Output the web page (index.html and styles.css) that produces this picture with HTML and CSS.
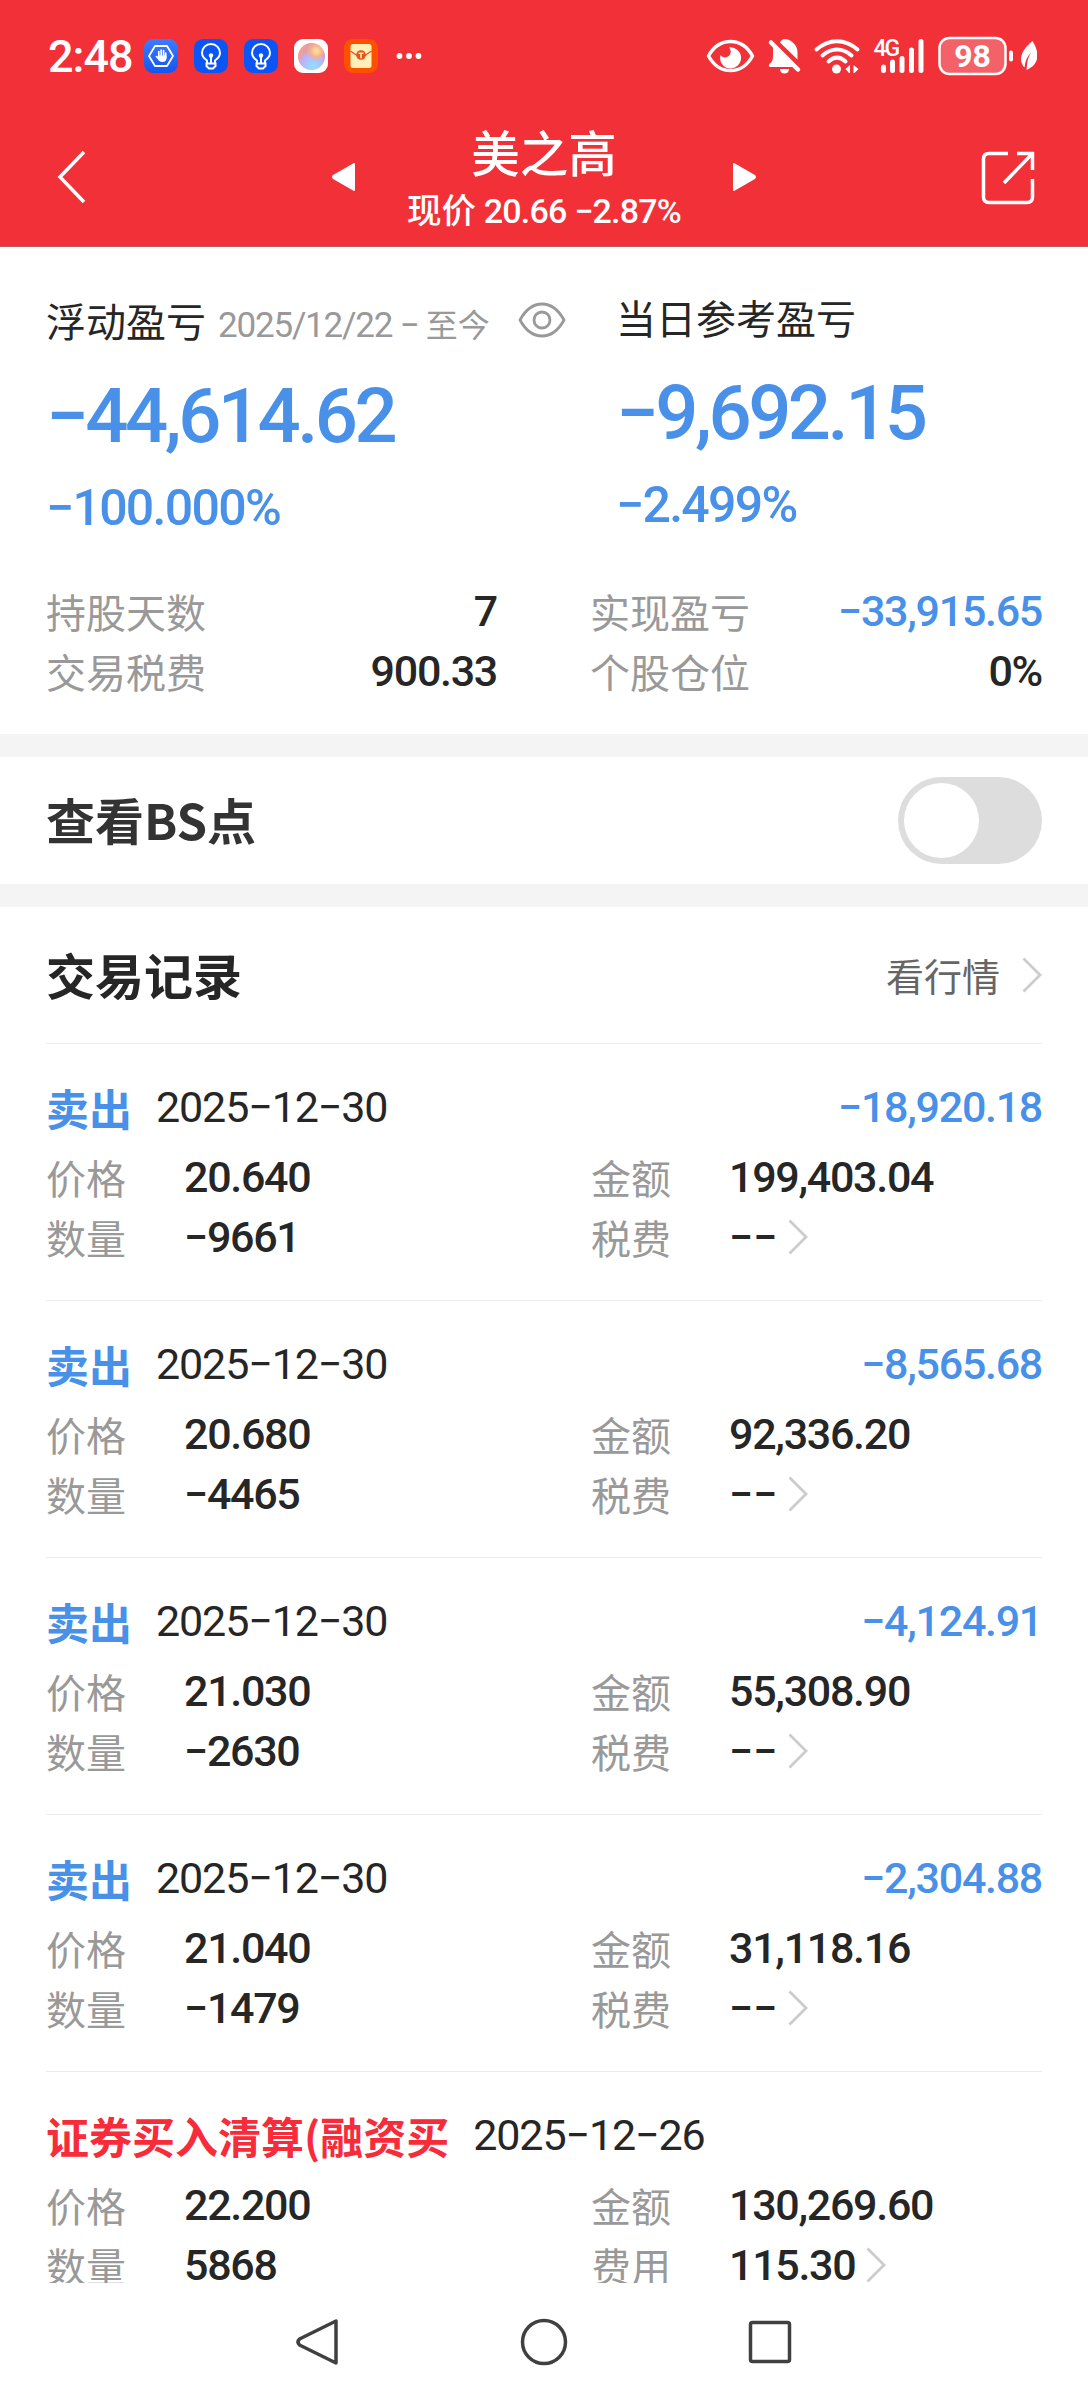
FILE: index.html
```html
<!DOCTYPE html>
<html lang="zh-CN">
<head>
    <meta charset="UTF-8">
    <title>美之高</title>
    <link rel="stylesheet" href="styles.css">
</head>
<body>
<svg class="symbols">
    <symbol id="chevron" viewBox="0 0 20 36">
        <path d="M1.5 1.5L18 18L1.5 34.5" fill="none" stroke="currentColor" stroke-width="2.8"/>
    </symbol>
    <symbol id="bulb" viewBox="0 0 34 34">
        <path d="M13 24v-2.5c-3-2-5-4-5-7.500a9 9 0 0 1 18 0c0 3.500-2 5.500-5 7.500V24M12.500 24.500h9v2.500l-2.500 2.500h-4L12.500 27z" fill="none" stroke="#fff" stroke-width="2"/>
        <circle cx="17" cy="16.500" r="2.200" fill="#fff"/>
        <path d="M17 16.500V24" stroke="#fff" stroke-width="2"/>
    </symbol>
</svg>

<div class="header">
    <div class="status-bar">
        <div class="status-left">
            <span class="time num">2:48</span>
            <div class="app-icon app-hand">
                <svg viewBox="0 0 34 34">
                    <path d="M11 7h12l6 10-6 10H11L5 17z" fill="none" stroke="#fff" stroke-width="1.800" stroke-linejoin="round"/>
                    <path d="M14.800 18v-5.500M17.200 17v-6M19.600 17v-5.500M21.700 18v-4" stroke="#fff" stroke-width="1.700" stroke-linecap="round"/>
                    <path d="M14 16.500h8.600V19c0 2.500-1.600 4-4 4-2.600 0-3.600-1-4.800-2.700l-2.500-3c.8-1.200 1.900-.6 2.700.4z" fill="#fff"/>
                </svg>
            </div>
            <div class="app-icon app-bulb"><svg><use href="#bulb"/></svg></div>
            <div class="app-icon app-bulb"><svg><use href="#bulb"/></svg></div>
            <div class="app-icon app-ball"><div class="ball"></div></div>
            <div class="app-icon app-mail">
                <svg viewBox="0 0 34 34">
                    <rect x="6.500" y="5" width="21" height="24" rx="2.500" fill="#fff0b8"/>
                    <path d="M6.500 12l6.500 4.500M27.500 12L21 16.500" stroke="#e8531b" stroke-width="1.300"/>
                    <circle cx="17" cy="16" r="4.800" fill="#e8531b"/>
                    <path d="M14.500 14.200h5M17 14.200v5" stroke="#fff0b8" stroke-width="1.600"/>
                </svg>
            </div>
            <svg class="dots" viewBox="0 0 26 8" fill="#fff">
                <circle cx="3.500" cy="4" r="2.900"/><circle cx="13" cy="4" r="2.900"/><circle cx="22.500" cy="4" r="2.900"/>
            </svg>
        </div>
        <svg class="status-right" viewBox="0 0 332 40" fill="none">
            <!-- eye comfort -->
            <path d="M3.500 20C9 10 16 5.500 25.500 5.500S42 10 47.500 20C42 30 35 34.500 25.500 34.500S9 30 3.500 20z" stroke="#fff" stroke-width="3.500" stroke-linejoin="round"/>
            <path d="M24 11.500a10.500 10.500 0 1 1-8.500 7.500c1.500 2 4 3 6.500 2 4-1.500 5-6 2-9.500z" fill="#fff"/>
            <!-- muted bell -->
            <path d="M75 6.500c1-3 4.500-4.500 8-3 6 2.500 9.500 7 9.500 13v7z" fill="#fff"/>
            <path d="M68 9l22 22H65.500c-2 0-2-2.500-.5-3.500 2.500-2 3-4 3-8z" fill="#fff"/>
            <path d="M66 6.500l27 27" stroke="#fff" stroke-width="4.500" stroke-linecap="round"/>
            <path d="M75 33h9c0 3-2 4.500-4.500 4.500S75 36 75 33z" fill="#fff"/>
            <!-- wifi -->
            <g stroke="#fff" stroke-width="4" stroke-linecap="round">
                <path d="M111.500 13.500c12.500-11 28.500-11 41 0"/>
                <path d="M117.500 19.500c9-8 20-8 29 0"/>
                <path d="M123.500 25.500c5.500-5 11.500-5 17 0"/>
            </g>
            <circle cx="131.500" cy="33" r="4.500" fill="#fff"/>
            <path d="M145 29v8h-1l-3.500-4zM148.500 29v8h1l4-4z" fill="#fff"/>
            <!-- signal -->
            <text x="168.500" y="20" class="net-label">4G</text>
            <path d="M178.500 31v3.500M187.500 26v8.500M197 22.500v12M206.500 14v20.500M216 5.500v29" stroke="#fff" stroke-width="5" stroke-linecap="round"/>
            <!-- battery -->
            <rect x="234.500" y="2" width="66" height="36" rx="10" fill="#f46269" stroke="#fff" stroke-width="2.500"/>
            <text x="267.500" y="31" class="battery-level">98</text>
            <rect x="304" y="14.500" width="4" height="11" rx="2" fill="#fff"/>
            <path d="M327.500 5c7 11 7.500 23-5 28.500l-1 .5.500-5c.3-4 1.500-9 4.500-13-4 4-6.500 9-7 15.500-7-7-3-18 8-26.500z" fill="#fff"/>
        </svg>
    </div>
    <div class="title-bar">
        <svg class="back" viewBox="0 0 30 54"><path d="M27 2L3 27l24 25" fill="none" stroke="#fff" stroke-width="3.500"/></svg>
        <div class="stock">
            <svg class="arrow" viewBox="0 0 24 30"><path d="M22 2v26L2 16.500q-2-1.500 0-3z" fill="#fff" stroke="#fff" stroke-width="2" stroke-linejoin="round"/></svg>
            <div class="stock-info">
                <div class="stock-name">美之高</div>
                <div class="stock-price"><span class="price-label">现价</span> <span class="num">20.66 −2.87%</span></div>
            </div>
            <svg class="arrow" viewBox="0 0 24 30"><path d="M2 2v26l20-11.500q2-1.500 0-3z" fill="#fff" stroke="#fff" stroke-width="2" stroke-linejoin="round"/></svg>
        </div>
        <svg class="share" viewBox="0 0 54 54" fill="none" stroke="#fff" stroke-width="3.500">
            <path d="M27 2.500H8Q2.500 2.500 2.500 8v38q0 5.500 5.500 5.500h38q5.500 0 5.500-5.500V28M36 2.500h15.500V19M51 3L23 32"/>
        </svg>
    </div>
</div>

<div class="content">
    <div class="summary">
        <div class="profit-row">
            <div class="profit">
                <div class="profit-title">浮动盈亏
                    <span class="date-range"><span class="num">2025/12/22 −</span> 至今</span>
                    <svg class="eye" viewBox="0 0 48 36" fill="none" stroke="#999" stroke-width="2.800">
                        <path d="M2 18C8 7 15 2 24 2s16 5 22 16c-6 11-13 16-22 16S8 29 2 18z" stroke-linejoin="round"/>
                        <circle cx="24" cy="18" r="8"/>
                    </svg>
                </div>
                <div class="profit-value num">−44,614.62</div>
                <div class="profit-rate num">−100.000%</div>
            </div>
            <div class="profit today">
                <div class="profit-title">当日参考盈亏</div>
                <div class="profit-value num">−9,692.15</div>
                <div class="profit-rate num">−2.499%</div>
            </div>
        </div>
        <div class="details">
            <div class="detail"><span class="label">持股天数</span><span class="num">7</span></div>
            <div class="detail"><span class="label">实现盈亏</span><span class="num blue">−33,915.65</span></div>
            <div class="detail"><span class="label">交易税费</span><span class="num">900.33</span></div>
            <div class="detail"><span class="label">个股仓位</span><span class="num">0%</span></div>
        </div>
    </div>

    <div class="bs-row">
        <span class="section-title bs-title">查看BS点</span>
        <div class="toggle"></div>
    </div>

    <div class="trades">
        <div class="trades-header">
            <span class="section-title">交易记录</span>
            <span class="quote-link">看行情 <svg class="chevron"><use href="#chevron"/></svg></span>
        </div>

        <div class="record">
            <div class="record-head">
                <span class="type blue">卖出</span>
                <span class="date num">2025−12−30</span>
                <span class="amount num blue">−18,920.18</span>
            </div>
            <div class="record-grid">
                <span class="label">价格</span><span class="num">20.640</span>
                <span class="label">金额</span><span class="num">199,403.04</span>
                <span class="label">数量</span><span class="num">−9661</span>
                <span class="label">税费</span><span class="num fee"><span class="dashes">−−</span><svg class="chevron"><use href="#chevron"/></svg></span>
            </div>
        </div>

        <div class="record">
            <div class="record-head">
                <span class="type blue">卖出</span>
                <span class="date num">2025−12−30</span>
                <span class="amount num blue">−8,565.68</span>
            </div>
            <div class="record-grid">
                <span class="label">价格</span><span class="num">20.680</span>
                <span class="label">金额</span><span class="num">92,336.20</span>
                <span class="label">数量</span><span class="num">−4465</span>
                <span class="label">税费</span><span class="num fee"><span class="dashes">−−</span><svg class="chevron"><use href="#chevron"/></svg></span>
            </div>
        </div>

        <div class="record">
            <div class="record-head">
                <span class="type blue">卖出</span>
                <span class="date num">2025−12−30</span>
                <span class="amount num blue">−4,124.91</span>
            </div>
            <div class="record-grid">
                <span class="label">价格</span><span class="num">21.030</span>
                <span class="label">金额</span><span class="num">55,308.90</span>
                <span class="label">数量</span><span class="num">−2630</span>
                <span class="label">税费</span><span class="num fee"><span class="dashes">−−</span><svg class="chevron"><use href="#chevron"/></svg></span>
            </div>
        </div>

        <div class="record">
            <div class="record-head">
                <span class="type blue">卖出</span>
                <span class="date num">2025−12−30</span>
                <span class="amount num blue">−2,304.88</span>
            </div>
            <div class="record-grid">
                <span class="label">价格</span><span class="num">21.040</span>
                <span class="label">金额</span><span class="num">31,118.16</span>
                <span class="label">数量</span><span class="num">−1479</span>
                <span class="label">税费</span><span class="num fee"><span class="dashes">−−</span><svg class="chevron"><use href="#chevron"/></svg></span>
            </div>
        </div>

        <div class="record">
            <div class="record-head">
                <span class="type red">证券买入清算(融资买</span>
                <span class="date num">2025−12−26</span>
            </div>
            <div class="record-grid">
                <span class="label">价格</span><span class="num">22.200</span>
                <span class="label">金额</span><span class="num">130,269.60</span>
                <span class="label">数量</span><span class="num">5868</span>
                <span class="label">费用</span><span class="num fee">115.30<svg class="chevron"><use href="#chevron"/></svg></span>
            </div>
        </div>
    </div>
</div>

<div class="nav-bar">
    <svg viewBox="0 0 48 48"><path d="M42 3v42L5.500 27q-3-3 0-6z" stroke-linejoin="round"/></svg>
    <svg viewBox="0 0 48 48"><circle cx="24" cy="24" r="21.500"/></svg>
    <svg viewBox="0 0 48 48"><rect x="4.500" y="4.500" width="39" height="39" rx="2"/></svg>
</div>
</body>
</html>
```

FILE: styles.css
```css
* {
    margin: 0;
    padding: 0;
    box-sizing: border-box;
}

body {
    display: flex;
    flex-direction: column;
    width: 1088px;
    height: 2400px;
    overflow: hidden;
    background: #fff;
    color: #262626;
    font-family: "Noto Sans CJK SC", sans-serif;
    font-size: 40px;
}

svg {
    display: block;
    flex-shrink: 0;
}

.symbols {
    position: absolute;
    width: 0;
    height: 0;
}

.num {
    font-family: Roboto, "Noto Sans CJK SC", sans-serif;
    font-size: 43px;
    font-weight: 500;
    letter-spacing: -0.03em;
}

.blue {
    color: #4890e8;
}

.red {
    color: #f72b3a;
}

.label {
    color: #999;
}

/* Header */
.header {
    height: 247px;
    background: #f23038;
    border-bottom: 1px solid #c05a5e;
    color: #fff;
}

.status-bar {
    display: flex;
    justify-content: space-between;
    align-items: center;
    height: 112px;
    padding: 0 51px 0 48px;
}

.status-left {
    display: flex;
    align-items: center;
    gap: 16px;
}

.time {
    width: 80px;
    font-size: 45px;
    letter-spacing: -1px;
    white-space: nowrap;
}

.app-icon {
    display: flex;
    align-items: center;
    justify-content: center;
    width: 34px;
    height: 34px;
    border-radius: 9px;
}

.app-icon svg {
    width: 34px;
    height: 34px;
}

.app-hand {
    background: linear-gradient(#3d7cff, #1456f0);
}

.app-bulb {
    background: #0b55f5;
}

.app-ball {
    background: #fff;
}

.ball {
    width: 27px;
    height: 27px;
    border-radius: 50%;
    background:
        radial-gradient(circle at 68% 30%, #ffe9a0 0, #f7b08e 22%, transparent 38%),
        radial-gradient(circle at 55% 85%, #8fe0ff 0, #b9b4ff 40%, transparent 60%),
        linear-gradient(110deg, #f5a48f, #c58be0);
}

.app-mail {
    background: #ff5000;
}

.dots {
    width: 26px;
    height: 8px;
    margin-left: 2px;
}

.status-right {
    width: 332px;
    height: 40px;
}

.net-label {
    fill: #fff;
    font-family: Roboto, sans-serif;
    font-size: 23px;
    font-weight: 500;
    letter-spacing: -2px;
}

.battery-level {
    fill: #fff;
    font-family: Roboto, sans-serif;
    font-size: 32px;
    font-weight: 700;
    text-anchor: middle;
}

.title-bar {
    display: flex;
    justify-content: space-between;
    padding: 0 53px 0 57px;
}

.back {
    width: 30px;
    height: 54px;
    margin-top: 38px;
}

.share {
    width: 54px;
    height: 54px;
    margin-top: 39px;
}

.stock {
    display: flex;
    justify-content: space-between;
    width: 424px;
    margin-left: 20px;
}

.arrow {
    width: 24px;
    height: 30px;
    margin-top: 50px;
}

.stock-info {
    display: flex;
    flex-direction: column;
    align-items: center;
    padding-top: 8px;
}

.stock-name {
    font-size: 48.500px;
    font-weight: 500;
    line-height: 62px;
}

.stock-price {
    margin-top: 2px;
    font-size: 34.500px;
    line-height: 48px;
    white-space: nowrap;
}

.stock-price .num {
    font-size: 34px;
    letter-spacing: -0.8px;
}

.price-label {
    font-weight: 500;
}

/* Scrolled page, cut off by the navigation bar */
.content {
    height: 2036px;
    overflow: hidden;
}

.summary {
    height: 487px;
    padding: 0 46px;
}

.profit-row {
    display: flex;
    height: 334px;
}

.profit {
    width: 570px;
    padding-top: 43px;
}

.today {
    width: auto;
    padding-top: 40px;
}

.profit-title {
    display: flex;
    align-items: baseline;
    height: 60px;
    line-height: 60px;
    white-space: nowrap;
}

.date-range {
    margin-left: 12px;
    color: #999;
    font-size: 32px;
}

.date-range .num {
    font-size: 35px;
    font-weight: 400;
    letter-spacing: -1.2px;
}

.eye {
    align-self: center;
    width: 48px;
    height: 36px;
    margin-left: 28px;
}

.profit-value {
    margin-top: 16px;
    color: #4890e8;
    font-size: 76px;
    line-height: 100px;
    letter-spacing: -0.046em;
}

.profit-rate {
    margin-top: 7px;
    color: #4890e8;
    font-size: 50px;
    line-height: 70px;
    letter-spacing: -0.034em;
}

.details {
    display: grid;
    grid-template-columns: 451px 452px;
    justify-content: space-between;
}

.detail {
    display: flex;
    justify-content: space-between;
    line-height: 60px;
}

/* BS switch */
.bs-row {
    display: flex;
    justify-content: space-between;
    align-items: center;
    height: 173px;
    padding: 0 46px;
    border: solid #f4f4f4;
    border-width: 23px 0;
}

.section-title {
    padding-bottom: 3px;
    font-size: 49px;
    font-weight: 700;
    line-height: 60px;
}

.bs-title {
    color: #333;
}

.toggle {
    width: 144px;
    height: 87px;
    padding: 6px;
    border-radius: 44px;
    background: #ddd;
}

.toggle::before {
    display: block;
    content: "";
    width: 75px;
    height: 75px;
    border-radius: 50%;
    background: #fff;
}

/* Trade records */
.trades {
    padding: 0 46px;
}

.trades-header {
    display: flex;
    justify-content: space-between;
    align-items: center;
    height: 137px;
    border-bottom: 1px solid #ececec;
}

.quote-link {
    display: flex;
    align-items: center;
    gap: 22px;
    padding-bottom: 1px;
    color: #666;
    font-size: 38px;
    line-height: 60px;
}

.chevron {
    width: 20px;
    height: 36px;
    color: #ccc;
}

.record {
    height: 257px;
    padding-top: 33px;
    border-bottom: 1px solid #ececec;
}

.record-head {
    display: flex;
    height: 60px;
    line-height: 60px;
    white-space: nowrap;
}

.type {
    margin-right: 24px;
    font-size: 43px;
    font-weight: 700;
}

.date {
    font-weight: 400;
    letter-spacing: -0.026em;
}

.amount {
    margin-left: auto;
}

.record-grid {
    display: grid;
    grid-template-columns: 138px 407px 138px auto;
    margin-top: 10px;
    line-height: 60px;
}

.fee {
    display: flex;
    align-items: center;
    gap: 11px;
}

.dashes {
    letter-spacing: 0;
}

/* Navigation bar */
.nav-bar {
    display: flex;
    justify-content: center;
    gap: 178px;
    height: 117px;
    padding-top: 35px;
}

.nav-bar svg {
    width: 48px;
    height: 48px;
    fill: none;
    stroke: #404040;
    stroke-width: 3.5;
}
```
